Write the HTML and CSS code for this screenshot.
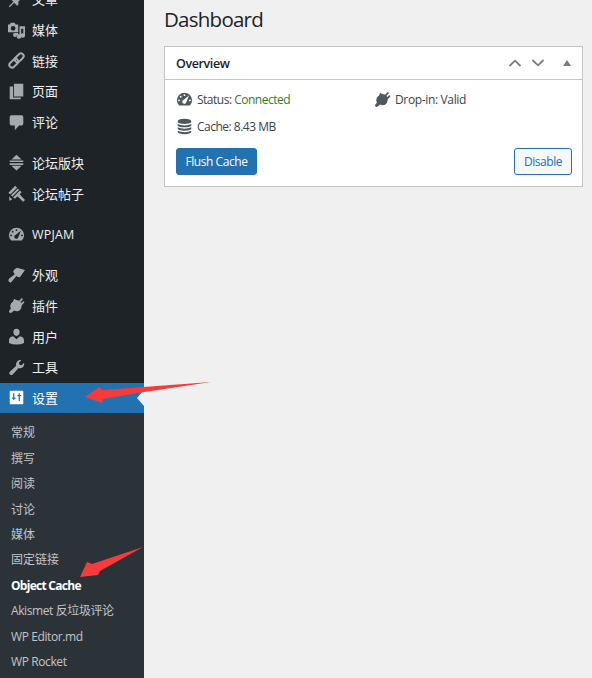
FILE: index.html
```html
<!DOCTYPE html>
<html lang="zh-CN">
<head>
<meta charset="utf-8">
<title>Dashboard</title>
<link rel="stylesheet" href="styles.css">
</head>
<body>
<svg class="defs" aria-hidden="true">
  <symbol id="gauge" viewBox="0 0 20 20"><path fill-rule="evenodd" d="M3.800 17Q1 14.500 1 11A9 9 0 0 1 19 11Q19 14.500 16.200 17ZM10 3.800a1.100 1.100 0 1 0 0 2.200 1.100 1.100 0 0 0 0-2.200ZM5.500 5.700a1.100 1.100 0 1 0 0 2.200 1.100 1.100 0 0 0 0-2.200ZM3.600 10a1.100 1.100 0 1 0 0 2.200 1.100 1.100 0 0 0 0-2.200ZM16.400 10a1.100 1.100 0 1 0 0 2.200 1.100 1.100 0 0 0 0-2.200ZM15.300 5.200 9.200 10.400a2.400 2.400 0 1 0 2.900 2.700Z"/></symbol>
  <symbol id="plug" viewBox="0 0 20 20"><path d="M13.100 4.400 15.800 1.600c.9-.7 2.100.5 1.500 1.400l-2.700 2.800 1.200 1.200 1.800-1.800c.9-.7 2.100.5 1.500 1.400l-2.900 3-.3 1.800c-.2 3-2.800 5.500-5.800 5.400-1.100 0-2.100-.4-2.900-1L4 18.600c-1.500.8-3.400-.8-2.600-2.400l2.100-2.700C1.900 10.800 3 7 5.800 5.500L7.200 2.200l1 .8Z"/></symbol>
</svg>
<div class="layout">
  <nav class="sidebar">
    <ul class="group">
      <li class="item"><svg class="icon" viewBox="0 0 20 20"><path d="m10.400 3 1.400-1.400 6.600 6.600L17 9.600l-1.600-.4-3.200 3.200.1 3.600-1.500 1.300-3.600-3.600L2 19l-1-1 5.300-5.400-3.500-3.500L4.100 8l3.700-.1L11 4.700Z"/></svg><span>文章</span></li>
      <li class="item"><svg class="icon media" viewBox="0 0 20 20"><path fill-rule="evenodd" d="M0 3h2l1.300-2h4.400L9 3h3v9H0ZM6 4.600a2.800 2.800 0 1 0 0 5.600 2.800 2.800 0 0 0 0-5.600Z"/><path d="M13.500 5H20v11a2.600 2.600 0 1 1-2-2.500V8h-2.500v9a2.600 2.600 0 1 1-2-2.500ZM8 13h4v2.300h-1.500A2.300 2.300 0 1 1 8 13Z"/></svg><span>媒体</span></li>
      <li class="item"><svg class="icon line" viewBox="0 0 20 20"><g transform="rotate(-45 10 10)"><rect x="-0.500" y="6.800" width="12" height="6.400" rx="3.200"/><rect x="8.500" y="6.800" width="12" height="6.400" rx="3.200"/></g></svg><span>链接</span></li>
      <li class="item"><svg class="icon" viewBox="0 0 20 20"><path d="M7 1h11v15H7ZM2 4h4v13h9v2H2Z"/></svg><span>页面</span></li>
      <li class="item"><svg class="icon" viewBox="0 0 20 20"><path d="M4 1.500h12q2 0 2 2v8q0 2-2 2h-3L8 19v-5.500H4q-2 0-2-2v-8q0-2 2-2Z"/></svg><span>评论</span></li>
    </ul>
    <ul class="group">
      <li class="item"><svg class="icon" viewBox="0 0 20 20"><path d="M10 1 16 6.500H4ZM2 7.500h16v2H2ZM2 10.800h16v2H2ZM4 13.800h12L10 19.500Z"/></svg><span>论坛版块</span></li>
      <li class="item"><svg class="icon" viewBox="0 0 20 20"><path d="M.5 9 8.500 1l2.200 2.200-8 8ZM3.600 12.200l8-8 1.500 1.500-8 8ZM6 14.600 14 6.600l2 2-2.300 2.300 6.300 6.600-2.300 2.300-6.500-6.500-3 3ZM1.500 13.500l3.500 3.500-3.500 1.500Z"/></svg><span>论坛帖子</span></li>
    </ul>
    <ul class="group">
      <li class="item"><svg class="icon"><use href="#gauge"/></svg><span class="latin">WPJAM</span></li>
    </ul>
    <ul class="group">
      <li class="item"><svg class="icon" viewBox="0 0 20 20"><path d="m7.500 3 3-2L20 3.500l-6 8.500-2.500-.2-1.500-1.300L3.200 18.500.5 16.800l.5-3 7-5.300L6 5.500Z"/></svg><span>外观</span></li>
      <li class="item"><svg class="icon"><use href="#plug"/></svg><span>插件</span></li>
      <li class="item"><svg class="icon" viewBox="0 0 20 20"><path d="M10 .8c2.600 0 3.700 1.700 3.700 3.900S12.200 9.300 10 9.300 6.300 6.900 6.300 4.700 7.400.8 10 .8ZM6 9.800l4 3.400 4-3.400c3 .4 4.800 2 4.800 4.500v3.200q-3.300 2-8.800 2t-8.800-2v-3.200c0-2.500 1.800-4.100 4.800-4.500Z"/></svg><span>用户</span></li>
      <li class="item"><svg class="icon" viewBox="0 0 20 20"><path d="M17.700 9.400c-1.300 1.500-3.400 1.900-5.200 1.300l-7 7.500c-.9.900-2.400.9-3.300 0s-.9-2.300 0-3.200l7.500-7.100c-.6-1.700-.2-3.700 1.200-5.100 1.300-1.400 3.100-1.800 4.800-1.400l-2.900 2.800.8 2.500 2.400.7 2.900-2.900c.4 1.700.1 3.500-1.200 4.900Z"/></svg><span>工具</span></li>
      <li class="item current"><svg class="icon" viewBox="0 0 20 20"><path fill-rule="evenodd" d="M3 2h14q1 0 1 1v14q0 1-1 1H3q-1 0-1-1V3q0-1 1-1ZM6 5v5H4.500v1.500H6V13h1.500v-1.500H9V10H7.500V5ZM12.500 5v2H11v1.500h1.500V14H14V8.500h1.500V7H14V5Z"/></svg><span>设置</span></li>
    </ul>
    <ul class="submenu">
      <li>常规</li>
      <li>撰写</li>
      <li>阅读</li>
      <li>讨论</li>
      <li>媒体</li>
      <li>固定链接</li>
      <li class="active">Object Cache</li>
      <li class="latin">Akismet 反垃圾评论</li>
      <li class="latin">WP Editor.md</li>
      <li class="latin">WP Rocket</li>
    </ul>
  </nav>
  <main class="content">
    <h1>Dashboard</h1>
    <section class="panel">
      <header class="panel-head">
        <h2>Overview</h2>
        <svg class="handle" viewBox="0 0 14 10"><path d="m1.500 8 5.500-5.300L12.500 8"/></svg>
        <svg class="handle" viewBox="0 0 14 10"><path d="m1.500 2 5.500 5.300L12.500 2"/></svg>
        <svg class="toggle" viewBox="0 0 8 6"><path d="M4 0 8 6H0Z"/></svg>
      </header>
      <div class="panel-body">
        <div class="stats">
          <p><svg class="stat-icon"><use href="#gauge"/></svg><span>Status: <b>Connected</b></span></p>
          <p><svg class="stat-icon"><use href="#plug"/></svg><span class="dropin">Drop-in: Valid</span></p>
          <p><svg class="stat-icon" viewBox="0 0 20 20"><path d="M2 4q0-3 8-3t8 3v1q-2 2-8 2T2 5ZM2 7q3 1.700 8 1.700T18 7v2q-2 2-8 2T2 9ZM2 11q3 1.700 8 1.700t8-1.700v2q-2 2-8 2t-8-2ZM2 15q3 1.700 8 1.700t8-1.700v1.500q-1 2.500-8 2.500t-8-2.500Z"/></svg><span>Cache: 8.43 MB</span></p>
        </div>
        <div class="actions">
          <button class="primary">Flush Cache</button>
          <button class="secondary">Disable</button>
        </div>
      </div>
    </section>
  </main>
</div>
<svg class="marks" viewBox="0 0 592 678" aria-hidden="true">
  <path class="notch" d="M144 390v16l-7-8Z"/>
  <path d="M211 382 103 390 99 387 85 397 102 403 103 399 138 393Z"/>
  <path d="M143 547 92 564 87 562 80 577 98 575 100 571Z"/>
</svg>
</body>
</html>
```
FILE: styles.css
```css
* { box-sizing: border-box; }

body {
  margin: 0;
  height: 678px;
  overflow: hidden;
  background: #f0f0f1;
  color: #3c434a;
  font-family: "Open Sans", "Noto Sans CJK SC", sans-serif;
  font-size: 12px;
}

ul, h1, h2, p { margin: 0; padding: 0; list-style: none; }

.defs { display: none; }

.layout { display: flex; height: 678px; overflow: hidden; }

.sidebar { flex: none; width: 144px; margin-top: -16px; background: #1d2327; }

.group { margin-bottom: 10.200px; }

.item {
  display: flex;
  align-items: center;
  gap: 7px;
  height: 30.680px;
  padding-left: 8px;
  color: #f0f0f1;
  font-size: 13px;
  line-height: 18px;
  white-space: nowrap;
}

.item .latin { padding-top: 1px; font-size: 12.500px; letter-spacing: 0.200px; }

.icon { flex: none; width: 17px; height: 17px; fill: #a7aaad; }
.line { fill: none; stroke: #a7aaad; stroke-width: 2.400; }
.media { overflow: visible; }

.current { background: #2271b1; color: #fff; }
.current .icon { fill: #fff; }

.submenu {
  height: 290px;
  margin-top: -10.200px;
  padding: 7px 0 0 11px;
  background: #2c3338;
  color: #c3c4c7;
}

.submenu li { height: 25.450px; line-height: 25.450px; white-space: nowrap; }
.submenu .active { color: #fff; font-weight: 700; letter-spacing: -0.720px; }
.submenu .latin { letter-spacing: -0.400px; }

.content { width: 439px; margin-left: 20px; }

h1 {
  height: 46px;
  padding-top: 6px;
  color: #1d2327;
  font-size: 20.500px;
  font-weight: 400;
  line-height: 26px;
  letter-spacing: -0.750px;
}

.panel {
  width: 419px;
  height: 141px;
  border: 1px solid #c3c4c7;
  background: #fff;
}

.panel-head {
  display: flex;
  align-items: center;
  height: 33px;
  padding: 0 11px;
  border-bottom: 1px solid #c3c4c7;
}

h2 {
  flex: 1;
  color: #1d2327;
  font-size: 12.500px;
  font-weight: 600;
  letter-spacing: -0.400px;
}

.handle { width: 14px; height: 10px; margin-right: 9px; fill: none; stroke: #787c82; stroke-width: 1.800; }
.toggle { width: 8px; height: 6px; margin-left: 9px; fill: #787c82; }

.panel-body { padding: 6px 10px 0 11px; }

.stats { display: grid; grid-template-columns: 198px 1fr; grid-auto-rows: 27px; }
.stats p { display: flex; align-items: center; gap: 4px; padding-bottom: 1px; letter-spacing: -0.500px; white-space: nowrap; }
.stats .dropin { letter-spacing: -0.350px; }
.stats b { color: #2e7d32; font-weight: 400; }
.stat-icon { width: 17px; height: 17px; fill: #50575e; }

.actions { display: flex; justify-content: space-between; margin-top: 8px; }

button {
  height: 27px;
  padding: 0;
  border: 1px solid #2271b1;
  border-radius: 3px;
  font: 12px/20px "Open Sans", sans-serif;
  letter-spacing: -0.450px;
}

.primary { width: 81px; background: #2271b1; color: #fff; }
.secondary { width: 58px; background: #f6f7f7; color: #2271b1; }

.marks { position: absolute; top: 0; left: 0; width: 592px; height: 678px; fill: #f93a3a; }
.marks .notch { fill: #f0f0f1; }
```
